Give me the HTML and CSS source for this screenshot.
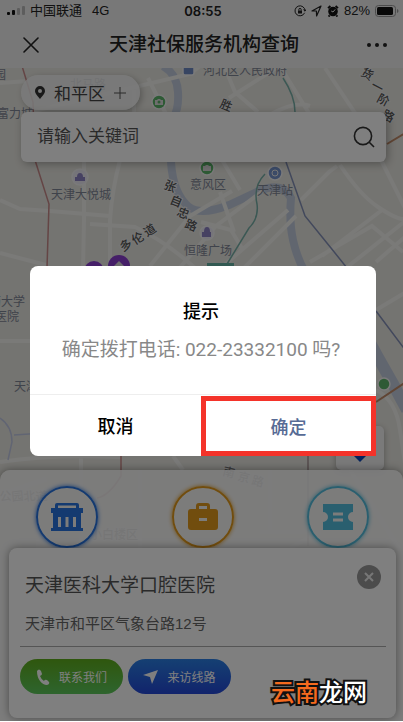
FILE: index.html
```html
<!DOCTYPE html>
<html lang="zh-Hans">
<head>
  <meta charset="UTF-8">
  <meta name="viewport" content="width=device-width, initial-scale=1">
  <title>天津社保服务机构查询</title>
  <link rel="stylesheet" href="styles.css">
</head>
<body>

<div class="app">
  <header class="header">
    <div class="status">
      <div class="status-left">
        <svg class="signal" width="18" height="10" viewBox="0 0 18 10">
          <rect x="0" y="6" width="3" height="3" rx="1" fill="#111"/>
          <rect x="5" y="4" width="3" height="5" rx="1" fill="#111"/>
          <rect x="10" y="2" width="3" height="7" rx="1" fill="#bbb"/>
          <rect x="15" y="0" width="3" height="9" rx="1" fill="#bbb"/>
        </svg>
        <span>中国联通</span>
        <span class="network">4G</span>
      </div>
      <div class="time">08:55</div>
      <div class="status-right">
        <svg width="12" height="12" viewBox="0 0 12 12" fill="none" stroke="#222">
          <path d="M10.6 7.8A5 5 0 1 1 11 6M9.4 4.6 11 6.2 12 4.4"/>
          <rect x="4" y="5.5" width="4" height="3" fill="#222" stroke="none"/>
          <path d="M4.800 5.500V4.600a1.200 1.200 0 0 1 2.400 0v.9"/>
        </svg>
        <svg width="11" height="12" viewBox="0 0 11 12" fill="none" stroke="#222" stroke-width="1.2" stroke-linejoin="round">
          <path d="M10 1 1 6h4.400l.2 5z"/>
        </svg>
        <svg width="12" height="12" viewBox="0 0 12 12">
          <circle cx="6" cy="6.5" r="4.8" fill="#111"/>
          <path d="M1 3.200 3.400 1M11 3.200 8.600 1M2.600 10.400 1.600 11.600M9.400 10.400l1 1.200" stroke="#111" stroke-width="1.8"/>
          <path d="M8.200 4.400 6 7 4.200 6" fill="none" stroke="#eee"/>
        </svg>
        <span>82%</span>
        <svg width="24" height="12" viewBox="0 0 24 12">
          <rect x=".5" y=".5" width="20" height="11" rx="3" fill="none" stroke="#999"/>
          <rect x="2" y="2" width="16" height="8" rx="1.5" fill="#111"/>
          <path d="M22 4v4q1.500-.6 1.500-2T22 4z" fill="#999"/>
        </svg>
      </div>
    </div>
    <div class="navbar">
      <button class="icon-btn" aria-label="关闭">
        <svg width="16" height="16" viewBox="0 0 16 16" stroke="#222" stroke-width="1.6" stroke-linecap="round"><path d="M1 1 15 15M15 1 1 15"/></svg>
      </button>
      <h1>天津社保服务机构查询</h1>
      <button class="icon-btn" aria-label="更多">
        <svg width="20" height="4" viewBox="0 0 20 4" fill="#222"><circle cx="2" cy="2" r="2"/><circle cx="10" cy="2" r="2"/><circle cx="18" cy="2" r="2"/></svg>
      </button>
    </div>
  </header>

  <main class="main">
    <svg class="map" viewBox="0 68 403 654" preserveAspectRatio="xMidYMin slice">
      <rect y="68" width="403" height="654" fill="#e9e8e2"/>
      <!-- river -->
      <g fill="none" stroke="#c3cddf" stroke-width="8">
        <path d="M163 66q14 8 15 26t-5 26q-3 26-2 44 2 32 18 45 12 9 40-2l32-15q22-8 30 8-2 24 2 42t12 32"/>
        <path d="M363 330q14 26 30 54l14 26" stroke-width="12"/>
      </g>
      <!-- main roads -->
      <g class="road">
        <path d="M0 83 28 81M0 200l20 9 30 2 60 5M84 160v60l-1 50M120 160q-8 30-10 60v52M90 224l45 3q30 14 60 41M0 253l46 12"/>
        <path d="M150 266l40-50 42-25M176 272l40-46 48-36M214 274l74-64M236 276l60-60M30 112l160-38 25-20M148 78l18 36M90 112v50M134 90v70"/>
        <path d="M225 68l10 24 23 20M229 98l60-38M325 68l40 60 40 80M262 120q30-20 48-14M280 66l38 62M222 160l18 30"/>
        <path d="M340 165q20 30 38 42t25 12M301 200l28-28 8-6M310 262l62-36 31 26M346 268l58-46M322 256l60-46M201 222l30 8 12 20M220 192l14 40"/>
        <path d="M376 310l30-18M376 262l30-26M0 341h32M376 390q20 10 24 40l6 40M0 462q50-8 120-5M81 456v110M173 456l10 14M0 495l46-16"/>
        <path d="M260 532h60l-30 16M270 470v62M350 470l50 80M38 540v60M140 470v80"/>
      </g>
      <!-- metro lines and borders -->
      <g fill="none" stroke-width="1.5">
        <path d="M22 66l11 36 2 58 14 44-2 64M121 456v20q-12 20-24 22" stroke="#c98a8a"/>
        <path d="M376 402l30-20M387 144l20-12" stroke="#c08a68" stroke-width="2"/>
        <path d="M283 78q12 18 12 34M265 174q-12 12-8 30 2 14-8 24l-22 36" stroke="#77b0a8"/>
        <path d="M286 162l19 54 26 32 16 20M376 311l30 40" stroke="#8491b8"/>
        <path d="M308 456v90" stroke="#a99"/>
        <path d="M0 418q12 8 12 24l-4 18M14 435l30-2" stroke="#c2cae6"/>
      </g>
      <!-- place markers -->
      <g stroke="#f4f4f4" stroke-width="1.5">
        <rect x="183" y="66" width="11" height="9" rx="2" fill="#6f8bc4"/>
        <circle cx="159" cy="102" r="7" fill="#5cb56a"/>
        <circle cx="207" cy="168" r="7" fill="#5cb56a"/>
        <circle cx="384" cy="384" r="6" fill="#5cb56a"/>
        <circle cx="80" cy="177" r="8" fill="#eceaf5"/>
        <circle cx="207" cy="233" r="7" fill="#eceaf5"/>
        <circle cx="275" cy="173" r="7" fill="#7795cf"/>
      </g>
      <path d="M155 100h2l1-1h2l1 1h2v5h-8zM203 166h2l1-1h2l1 1h2v5h-8z" fill="#ddd"/>
      <circle cx="159" cy="102" r="1.5" fill="#5cb56a"/>
      <path d="M75 177h10v4H75zM77 177q0-4 3-4t3 4zM202 232h9v5h-9zM204 232q0-5 3-5t3 5z" fill="#8d82c4"/>
      <circle cx="275" cy="173" r="3" fill="none" stroke="#eee"/>
      <rect x="207" y="263" width="27" height="8" fill="#65b3a5"/>
      <g fill="#8a3fd0">
        <circle cx="94" cy="271" r="10"/>
        <circle cx="119" cy="266" r="11"/>
      </g>
      <path d="M114 266l5-5 5 5v5h-10z" fill="#ddd"/>
      <g class="place">
        <text x="203" y="75">河北区人民政府</text>
        <text x="6" y="79" text-anchor="end">园</text>
        <text x="70" y="89">北马路</text>
        <text x="-3" y="118">富力城</text>
        <text x="51" y="199">天津大悦城</text>
        <text x="190" y="189">意风区</text>
        <text x="257" y="195">天津站</text>
        <text x="184" y="255">恒隆广场</text>
        <text x="-11" y="306">药大学</text>
        <text x="-5" y="321">医院</text>
        <text x="14" y="391">天津</text>
      </g>
      <g class="street">
        <text x="123" y="252" rotate="-32">多</text>
        <text x="135" y="245" rotate="-32">伦</text>
        <text x="147" y="237" rotate="-32">道</text>
        <text x="163" y="188" rotate="22">张</text>
        <text x="169" y="203" rotate="22">自</text>
        <text x="176" y="215" rotate="22">忠</text>
        <text x="184" y="227" rotate="22">路</text>
        <text x="219" y="107" rotate="22">胜</text>
        <text x="360" y="75" rotate="28">货</text>
        <text x="370" y="88" rotate="28">一</text>
        <text x="376" y="101" rotate="28">阶</text>
        <text x="381" y="117" rotate="28">路</text>
      </g>
      <g class="street faded">
        <text x="0" y="501" rotate="-6">公园北道</text>
        <text x="222" y="475" rotate="14">南</text>
        <text x="237" y="480" rotate="14">京</text>
        <text x="251" y="484" rotate="14">路</text>
        <text x="90" y="539">小白楼区</text>
      </g>
    </svg>

    <div class="tools">
      <button class="district">
        <svg width="10" height="13" viewBox="0 0 10 13"><path fill="#333" fill-rule="evenodd" d="M5 0a5 5 0 0 1 5 5c0 3-3 5-5 8-2-3-5-5-5-8a5 5 0 0 1 5-5zm0 3a2 2 0 1 0 0 4 2 2 0 0 0 0-4z"/></svg>
        <span>和平区</span>
        <svg width="12" height="12" viewBox="0 0 12 12" stroke="#555"><path d="M6 0v12M0 6h12"/></svg>
      </button>
      <label class="search">
        <input type="text" placeholder="请输入关键词" aria-label="请输入关键词">
        <svg width="22" height="22" viewBox="0 0 22 22" fill="none" stroke="#333" stroke-width="1.6"><circle cx="10" cy="10" r="8.6"/><path d="M16 16l5 5"/></svg>
      </label>
    </div>

    <button class="locate" aria-label="定位">
      <svg width="12" height="12" viewBox="0 0 12 12"><path d="M6 0l6 6-6 6-6-6z" fill="#0b46b8"/></svg>
    </button>

    <section class="panel">
      <nav class="services">
        <button class="service blue" aria-label="机构">
          <svg width="34" height="28" viewBox="0 0 34 28" fill="currentColor"><path fill-rule="evenodd" d="M5 5V2q0-2 2-2h20q2 0 2 2v3h4v5h-2v15h2v3H1v-3h2V10H1V5zM8 2.500V5h18V2.500zM8 14v10h3V14zM15.500 14v10h3V14zM23 14v10h3V14z"/></svg>
        </button>
        <button class="service orange" aria-label="业务">
          <svg width="32" height="28" viewBox="0 0 32 28" fill="currentColor"><path fill-rule="evenodd" d="M9 6V3q0-3 3-3h8q3 0 3 3v3h5q3 0 3 3v15q0 3-3 3H4q-3 0-3-3V9q0-3 3-3zm3 0h8V3h-8zm0 9v3h8v-3z"/></svg>
        </button>
        <button class="service cyan" aria-label="票据">
          <svg width="32" height="28" viewBox="0 0 32 28" fill="currentColor"><path fill-rule="evenodd" d="M1 1h30v8a5 5 0 0 0 0 10v8H1v-8A5 5 0 0 0 1 9zM11 9.500v3h10v-3zM11 15.500v3h10v-3z"/></svg>
        </button>
      </nav>

      <article class="card">
        <div class="card-head">
          <h2>天津医科大学口腔医院</h2>
          <button class="card-close" aria-label="关闭">
            <svg width="10" height="10" viewBox="0 0 10 10" stroke="#eee" stroke-width="2"><path d="M1 1l8 8M9 1 1 9"/></svg>
          </button>
        </div>
        <p>天津市和平区气象台路12号</p>
        <div class="actions">
          <button class="action call">
            <svg width="14" height="16" viewBox="0 0 14 16" fill="#fff"><path d="M1 2q2-3 4 0l1 3q0 1-2 2 1 3 4 5 1-2 3-1l2 2q1 2-2 3-4 0-7-4T1 2z"/></svg>
            联系我们
          </button>
          <button class="action route">
            <svg width="15" height="15" viewBox="0 0 15 15" fill="#fff"><path d="M15 1 0 6l7 2 2 7z"/></svg>
            来访线路
          </button>
        </div>
      </article>
    </section>
  </main>

  <div class="mask">
    <div class="dialog" role="dialog" aria-labelledby="dialogTitle">
      <div class="dialog-body">
        <h3 id="dialogTitle">提示</h3>
        <p>确定拨打电话: 022-23332100 吗?</p>
      </div>
      <div class="dialog-foot">
        <button class="cancel">取消</button>
        <button class="confirm">确定</button>
      </div>
    </div>
  </div>

  <div class="watermark"><span>云南</span>龙网</div>
</div>

</body>
</html>
```

FILE: styles.css
```css
* { box-sizing: border-box; }
body {
  margin: 0;
  font-family: "Liberation Sans", "Noto Sans CJK SC", sans-serif;
  color: #222;
  background: #fff;
}
h1, h2, h3, p { margin: 0; }
svg { display: block; flex: none; }
button {
  padding: 0;
  border: none;
  background: none;
  font: inherit;
  color: inherit;
  cursor: pointer;
}
.app {
  position: relative;
  display: flex;
  flex-direction: column;
  min-height: calc(100vh - 1px);
  overflow: hidden;
}

/* header */
.header { background: #f0f0f0; }
.status {
  display: grid;
  grid-template-columns: 1fr auto 1fr;
  align-items: center;
  height: 22px;
  padding: 0 4px 0 7px;
  font-size: 13px;
  line-height: 20px;
}
.status-left, .status-right {
  display: flex;
  align-items: center;
  gap: 5px;
}
.status-right { justify-content: flex-end; }
.network { margin-left: 5px; }
.time {
  font-family: Inter, sans-serif;
  font-weight: 600;
}
.navbar {
  display: flex;
  align-items: center;
  justify-content: space-between;
  height: 46px;
  padding: 0 16px 0 21px;
}
.navbar h1 {
  font-size: 19px;
  line-height: 28px;
  font-weight: 500;
}
.icon-btn {
  display: flex;
  align-items: center;
  justify-content: center;
  width: 20px;
  height: 20px;
}

/* map */
.main {
  position: relative;
  flex: 1;
  display: flex;
  flex-direction: column;
}
.map {
  position: absolute;
  inset: 0;
  width: 100%;
  height: 100%;
}
.road { fill: none; stroke: #f4f4f1; stroke-width: 4; }
.place { font-size: 12px; fill: #7f8696; }
.street {
  font-size: 12px;
  font-weight: 500;
  fill: #555;
  stroke: #eee;
  stroke-width: 2px;
  paint-order: stroke;
}
.faded { fill: #777; }

.tools {
  position: relative;
  display: flex;
  flex-direction: column;
  align-items: flex-start;
  gap: 2px;
  padding: 7px 17px 0 21px;
}
.district {
  display: flex;
  align-items: center;
  gap: 9px;
  height: 35px;
  padding: 0 14px;
  border-radius: 18px;
  background: rgba(244,244,244,0.85);
  box-shadow: 2px 2px 6px rgba(0,0,0,0.25);
  font-size: 17px;
  color: #444;
}
.search {
  display: flex;
  align-items: center;
  width: 100%;
  height: 50px;
  padding: 0 11px 0 16px;
  border-radius: 6px;
  background: #fff;
  box-shadow: 2px 2px 8px rgba(0,0,0,0.3);
}
.search input {
  flex: 1;
  min-width: 0;
  padding: 0;
  border: none;
  outline: none;
  background: none;
  font: inherit;
  font-size: 17px;
}
.search input::placeholder { color: #555; }
.locate {
  position: relative;
  display: flex;
  align-items: flex-end;
  justify-content: center;
  align-self: flex-end;
  width: 48px;
  height: 44px;
  margin: auto 19px 0 0;
  padding-bottom: 8px;
  border-radius: 5px;
  background: #f4f4f4;
  box-shadow: 0 2px 6px rgba(0,0,0,0.3);
}

/* bottom panel */
.panel {
  position: relative;
  padding: 0 7px 3px 9px;
  border-radius: 10px 10px 0 0;
  background: rgba(250,250,250,0.9);
  box-shadow: 0 0 8px rgba(0,0,0,0.4);
}
.services {
  display: flex;
  justify-content: space-between;
  padding: 16px 27px 0;
}
.service {
  display: flex;
  align-items: center;
  justify-content: center;
  width: 62px;
  height: 62px;
  border: 2px solid currentColor;
  border-radius: 50%;
  box-shadow: 0 0 4px currentColor;
}
.blue { color: #2874e0; }
.orange { color: #e39a1c; }
.cyan { color: #55bede; }
.card {
  position: relative;
  padding: 15px 10px 24px 11px;
  border-radius: 8px;
  background: #fff;
  box-shadow: 0 0 8px rgba(0,0,0,0.4);
}
.card-head {
  display: flex;
  align-items: flex-start;
  justify-content: space-between;
  padding: 0 5px;
}
.card h2 {
  padding-top: 9px;
  font-size: 19px;
  line-height: 28px;
  font-weight: 400;
  color: #555;
}
.card-close {
  display: flex;
  align-items: center;
  justify-content: center;
  width: 24px;
  height: 24px;
  margin-top: 2px;
  border-radius: 50%;
  background: #999;
}
.card p {
  padding: 12px 5px 10px;
  border-bottom: 1px solid #aaa;
  font-size: 15px;
  line-height: 24px;
  color: #666;
}
.actions {
  display: flex;
  gap: 5px;
  padding-top: 12px;
}
.action {
  display: flex;
  align-items: center;
  justify-content: center;
  gap: 9px;
  width: 103px;
  height: 35px;
  border-radius: 18px;
  font-size: 12px;
  color: #fff;
}
.call { background: linear-gradient(#5fae1c, #5cc95c); }
.route { background: linear-gradient(#2a80e6, #2448d8); }

/* dialog */
.mask {
  position: absolute;
  inset: 0;
  display: flex;
  align-items: center;
  justify-content: center;
  padding: 0 27px 0 30px;
  background: rgba(0,0,0,0.5);
}
.dialog {
  width: 100%;
  border-radius: 8px;
  background: #fff;
  text-align: center;
}
.dialog-body {
  padding: 32px 20px 30px 16px;
  border-bottom: 1px solid #eee;
}
.dialog h3 {
  font-size: 18px;
  line-height: 28px;
  font-weight: 500;
  color: #000;
}
.dialog p {
  padding-top: 10px;
  font-family: Roboto, "Noto Sans CJK SC", sans-serif;
  font-size: 19px;
  line-height: 28px;
  color: #888;
  white-space: nowrap;
}
.dialog-foot {
  display: grid;
  grid-template-columns: 43fr 44fr;
  height: 61px;
  font-size: 18px;
  font-weight: 500;
}
.cancel { color: #000; }
.confirm {
  margin-top: 1px;
  border: 5px solid #f4332a;
  color: #576b95;
}
.watermark {
  position: absolute;
  right: 36px;
  bottom: 12px;
  font-size: 24px;
  line-height: 32px;
  font-weight: 500;
  color: #fff;
  -webkit-text-stroke: 4px #111;
  paint-order: stroke fill;
}
.watermark span { color: #f56a1e; }
```
